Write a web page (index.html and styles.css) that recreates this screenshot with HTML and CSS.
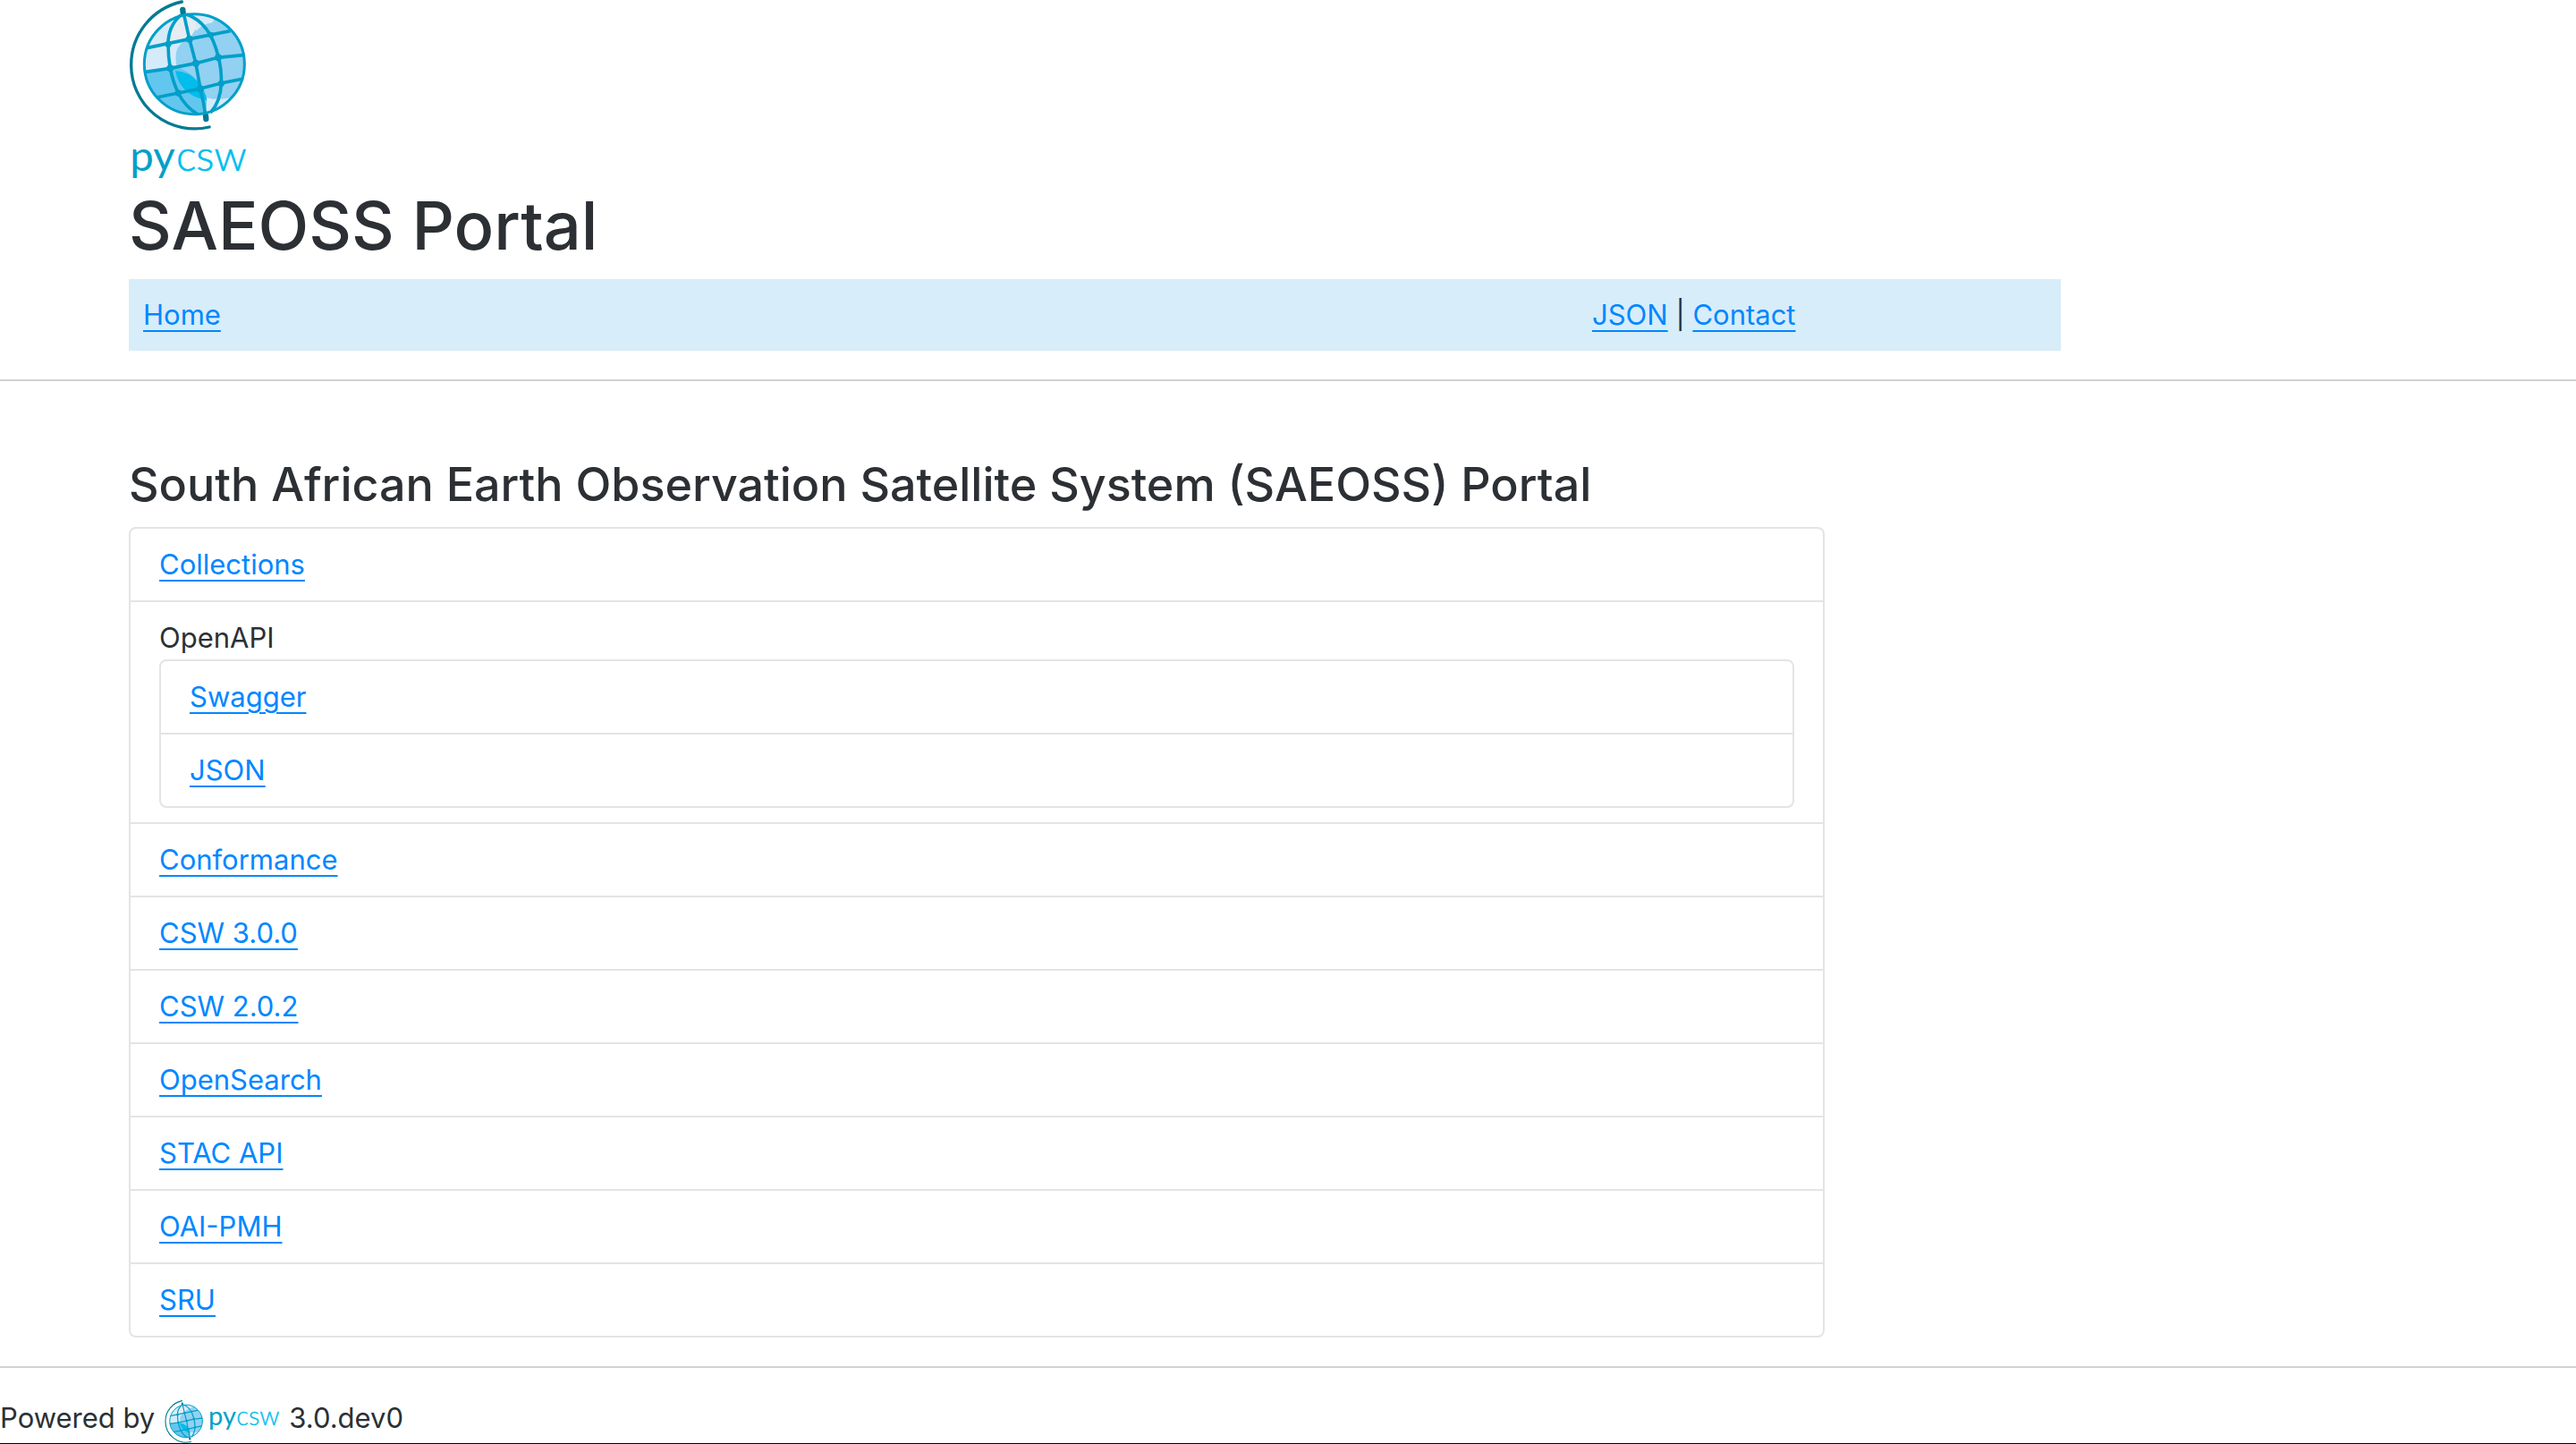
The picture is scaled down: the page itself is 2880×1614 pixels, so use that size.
FILE: index.html
```html
<!DOCTYPE html>
<html lang="en">
<head>
<meta charset="utf-8">
<title>SAEOSS Portal</title>
<link rel="stylesheet" href="styles.css">
</head>
<body>
<header class="container">
  <svg class="logo" viewBox="72 0 396 600" role="img" aria-label="pycsw">
    <defs>
      <clipPath id="disc"><circle cx="292" cy="215" r="168"/></clipPath>
      <symbol id="globe" viewBox="72 0 396 440">
        <g clip-path="url(#disc)">
          <rect x="120" y="40" width="350" height="350" fill="#92d1f1"/>
          <path d="M110 30H300Q302 90 275 130Q228 150 230 190Q228 212 236 235L110 250Z" fill="#d6ebf9"/>
          <path d="M225 40H285Q305 75 298 95L275 130L205 140Q210 90 225 40Z" fill="#e5edf3"/>
          <path d="M290 40H350Q365 60 352 76Q320 80 298 104Z" fill="#d6ebf9"/>
          <path d="M110 245L236 226Q300 250 325 310Q345 340 335 395H110Z" fill="#63c6ee"/>
          <path d="M228 238Q275 240 305 275Q328 300 334 337Q245 320 228 238Z" fill="#00bdec"/>
          <path d="M334 328Q370 338 420 326L390 390H330Z" fill="#d6ebf9"/>
        </g>
        <g fill="none" stroke="#009fc9" stroke-width="11">
          <path d="M256 45Q266 90 275 130L297 213L312 298Q324 345 329 385"/>
          <path d="M247 50Q203 88 204 150Q204 190 211 229Q220 275 238 312Q262 360 305 384"/>
          <path d="M265 48Q345 75 372 190Q384 235 382 280Q380 340 346 378"/>
          <path d="M132 161L275 131L412 104M124 242L211 229L297 212L372 193L462 184M163 327L238 312L312 297L382 279L456 264"/>
        </g>
        <g fill="#009fc9">
          <circle cx="204" cy="148" r="11"/><circle cx="275" cy="131" r="12"/><circle cx="347" cy="117" r="10"/>
          <circle cx="211" cy="229" r="12"/><circle cx="297" cy="212" r="12"/><circle cx="372" cy="193" r="12"/>
          <circle cx="238" cy="312" r="11"/><circle cx="312" cy="298" r="12"/><circle cx="382" cy="280" r="11"/>
        </g>
        <g fill="none" stroke-linecap="round">
          <path d="M253 33L254 42M330 388L331 399" stroke="#007a94" stroke-width="19"/>
          <circle cx="292" cy="215" r="168" stroke="#009fc9" stroke-width="9"/>
          <path d="M250 6A216 216 0 0 0 80 218A213 213 0 0 0 342 426" stroke="#007a94" stroke-width="10"/>
        </g>
      </symbol>
    </defs>
    <use href="#globe" x="72" y="0" width="396" height="440"/>
    <text class="mark-py" x="76" y="573" font-size="142">py</text>
    <text class="mark-csw" x="231" y="573" font-size="142">csw</text>
  </svg>
  <h1 class="title">SAEOSS Portal</h1>
  <nav class="crumbs">
    <div class="crumb"><a href="#">Home</a></div>
    <div class="crumb"><a href="#">JSON</a> | <a href="#">Contact</a></div>
  </nav>
</header>
<hr class="rule">
<main class="container content">
  <h2 class="subtitle">South African Earth Observation Satellite System (SAEOSS) Portal</h2>
  <ul class="list main-list">
    <li class="item"><a href="#">Collections</a></li>
    <li class="item">OpenAPI
      <ul class="list">
        <li class="item"><a href="#">Swagger</a></li>
        <li class="item"><a href="#">JSON</a></li>
      </ul>
    </li>
    <li class="item"><a href="#">Conformance</a></li>
    <li class="item"><a href="#">CSW 3.0.0</a></li>
    <li class="item"><a href="#">CSW 2.0.2</a></li>
    <li class="item"><a href="#">OpenSearch</a></li>
    <li class="item"><a href="#">STAC API</a></li>
    <li class="item"><a href="#">OAI-PMH</a></li>
    <li class="item"><a href="#">SRU</a></li>
  </ul>
</main>
<hr class="rule">
<footer class="footer">
  <span>Powered by</span>
  <a class="footer-link" href="#"><svg class="footer-logo" viewBox="0 0 384 144" role="img" aria-label="pycsw">
    <use href="#globe" x="0" y="0" width="130" height="144"/>
    <text class="mark-py" x="147" y="85" font-size="87">py</text>
    <text class="mark-csw small" x="241" y="85" font-size="87">csw</text>
  </svg></a>
  <span>3.0.dev0</span>
</footer>
</body>
</html>
```
FILE: styles.css
```css
* { box-sizing: border-box; }

body {
  margin: 0;
  background: #fff;
  color: #2c3034;
  font-family: Inter, "Liberation Sans", sans-serif;
  font-size: 31px;
  line-height: 48px;
}

a {
  color: #0087ff;
  text-decoration: underline;
  text-decoration-thickness: 2px;
  text-underline-offset: 6px;
}

.container { padding-left: 5%; }

.logo {
  display: block;
  width: 132px;
  height: 200px;
}

.mark-py,
.mark-csw {
  font-family: Lato, sans-serif;
}
.mark-py { fill: #00a0c8; font-weight: 400; }
.mark-csw { fill: #00bdf0; stroke: #00bdf0; stroke-width: 2px; font-weight: 300; }
.small { stroke-width: 1px; }

.title {
  margin: 0;
  padding: 4px 0 12px;
  font-size: 74px;
  font-weight: 500;
  line-height: 96px;
}

.crumbs {
  display: grid;
  grid-template-columns: 3fr 1fr;
  width: 75vw;
  background: #d7edf9;
}
.crumb { padding: 16px; }

.rule {
  margin: 32px 0;
  border: 0;
  border-top: 2px solid #d0d1d2;
}

.content { padding-top: 50px; }

.subtitle {
  margin: 0 0 14px;
  font-size: 52px;
  font-weight: 500;
  line-height: 67px;
}

.list {
  margin: 0;
  padding: 0;
  list-style: none;
  border: 2px solid #e4e4e5;
  border-radius: 8px;
}
.main-list { width: 69.3%; }

.item { padding: 16px 32px; }
.item + .item { border-top: 2px solid #e4e4e5; }

.footer {
  display: flex;
  gap: 11px;
  height: 53px;
  border-bottom: 1px solid #000;
}
.footer-link { align-self: flex-end; }
.footer-logo {
  display: block;
  width: 128px;
  height: 48px;
}
```
